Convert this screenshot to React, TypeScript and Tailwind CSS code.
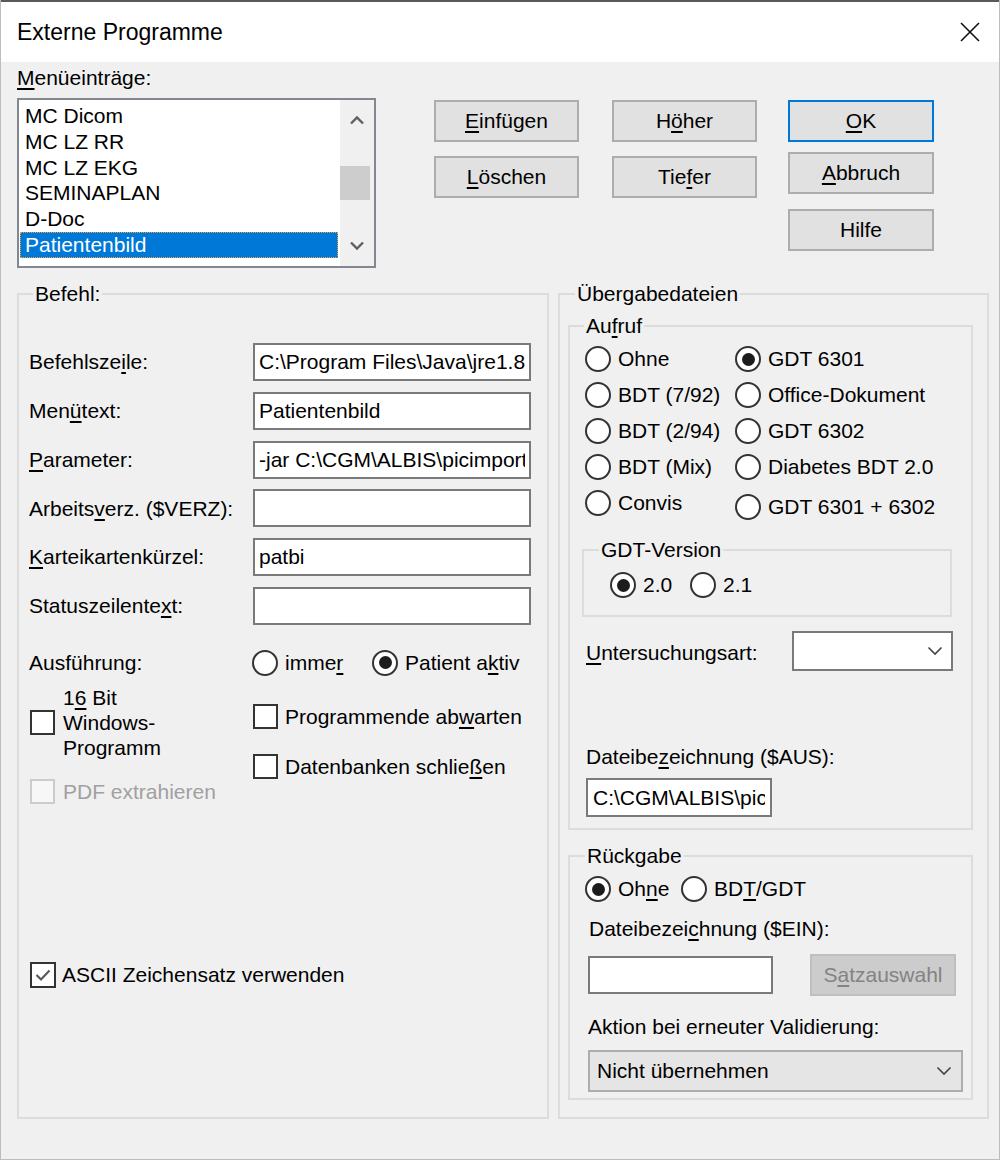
import React from 'react';

type Kids = { children?: React.ReactNode };

function M({ children }: Kids) {
  return <span className="underline underline-offset-[3px] decoration-[1.5px]">{children}</span>;
}

function Radio({ checked, label, className = '' }: { checked?: boolean; label: React.ReactNode; className?: string }) {
  return (
    <div className={`flex items-center h-[30px] ${className}`}>
      <span className="w-[26px] h-[26px] rounded-full border-2 border-[#333333] bg-white flex items-center justify-center shrink-0">
        {checked && <span className="w-[13px] h-[13px] rounded-full bg-[#1c1c1c]" />}
      </span>
      <span className="ml-[7px] leading-[24px] whitespace-nowrap">{label}</span>
    </div>
  );
}

function Check({ checked, disabled, size = 'w-[25px] h-[25px]' }: { checked?: boolean; disabled?: boolean; size?: string }) {
  return (
    <span
      className={`${size} border-2 flex items-center justify-center shrink-0 ${
        disabled ? 'border-[#cccccc] bg-[#f7f7f7]' : 'border-[#333333] bg-white'
      }`}
    >
      {checked && (
        <svg width="18" height="16" viewBox="0 0 18 16">
          <path d="M2.5 8 L7 12.5 L15.5 3.5" fill="none" stroke="#5a5a5a" strokeWidth="2.2" />
        </svg>
      )}
    </span>
  );
}

function Chevron({ color = '#444444' }: { color?: string }) {
  return (
    <svg width="16" height="10" viewBox="0 0 16 10">
      <path d="M1.5 1.5 L8 8 L14.5 1.5" fill="none" stroke={color} strokeWidth="1.6" />
    </svg>
  );
}

function Group({ title, legendClass, className = '', children }: Kids & { title: React.ReactNode; legendClass: string; className?: string }) {
  return (
    <fieldset className={`border-2 border-[#dcdcdc] p-0 m-0 min-w-0 ${className}`}>
      <legend className={`px-[2px] h-[24px] leading-[24px] ${legendClass}`}>{title}</legend>
      {children}
    </fieldset>
  );
}

const btn = 'h-[42px] bg-[#e1e1e1] border-2 border-[#adadad] flex items-center justify-center';
const field = 'bg-white border-2 border-[#7a7a7a] text-[21px] outline-none px-[4px] text-black';

const menuItems = ['MC Dicom', 'MC LZ RR', 'MC LZ EKG', 'SEMINAPLAN', 'D-Doc', 'Patientenbild'];

export default function App() {
  return (
    <div className="w-[1000px] h-[1160px] bg-[#f0f0f0] border-x border-b border-[#bdbdbd] text-[21px] text-black font-['Liberation_Sans',Arial,sans-serif]">
      {/* title bar */}
      <div className="h-[62px] bg-white border-t-2 border-[#595959] flex items-center pl-[16px] pr-[19px]">
        <span className="text-[23px] leading-[28px]">Externe Programme</span>
        <svg className="ml-auto" width="20" height="20" viewBox="0 0 20 20">
          <path d="M1 1 L19 19 M19 1 L1 19" stroke="#111111" strokeWidth="1.6" />
        </svg>
      </div>

      <div className="pl-[16px] pr-[10px] pt-[4px]">
        {/* top: list + buttons */}
        <div className="flex items-start h-[202px]">
          <div className="w-[359px]">
            <div className="h-[24px] leading-[24px]">
              <M>M</M>enüeinträge:
            </div>
            <div className="mt-[8px] h-[170px] border-2 border-[#828790] bg-white flex">
              <div className="w-[321px] pt-[3px] overflow-hidden">
                {menuItems.map(item =>
                  item === 'Patientenbild' ? (
                    <div
                      key={item}
                      className="ml-[1px] w-[318px] h-[25.8px] leading-[25.8px] pl-[5px] bg-[#0078d7] text-white outline-1 outline-dotted outline-[#f0a53c] -outline-offset-1"
                    >
                      {item}
                    </div>
                  ) : (
                    <div key={item} className="h-[25.8px] leading-[25.8px] pl-[6px] whitespace-nowrap">
                      {item}
                    </div>
                  )
                )}
              </div>
              <div className="flex-1 bg-[#f0f0f0] flex flex-col">
                <div className="h-[40px] flex items-center justify-center">
                  <svg width="16" height="10" viewBox="0 0 16 10">
                    <path d="M2 8.5 L8 2.5 L14 8.5" fill="none" stroke="#606060" strokeWidth="2.4" />
                  </svg>
                </div>
                <div className="mt-[26px] h-[34px] w-[30px] bg-[#cdcdcd]" />
                <div className="flex-1" />
                <div className="h-[40px] flex items-center justify-center">
                  <svg width="16" height="10" viewBox="0 0 16 10">
                    <path d="M2 1.5 L8 7.5 L14 1.5" fill="none" stroke="#606060" strokeWidth="2.4" />
                  </svg>
                </div>
              </div>
            </div>
          </div>

          <div className="ml-[58px] mt-[34px] flex flex-col gap-[14px] w-[145px]">
            <div className={btn}>
              <span>
                <M>E</M>infügen
              </span>
            </div>
            <div className={btn}>
              <span>
                <M>L</M>öschen
              </span>
            </div>
          </div>
          <div className="ml-[33px] mt-[34px] flex flex-col gap-[14px] w-[145px]">
            <div className={btn}>
              <span>
                H<M>ö</M>her
              </span>
            </div>
            <div className={btn}>
              <span>
                Tie<M>f</M>er
              </span>
            </div>
          </div>
          <div className="ml-[31px] mt-[34px] flex flex-col w-[146px]">
            <div className="h-[42px] bg-[#e1e1e1] border-2 border-[#0078d7] flex items-center justify-center">
              <span>
                <M>O</M>K
              </span>
            </div>
            <div className={`${btn} mt-[10px] h-[41px]`}>
              <span>
                <M>A</M>bbruch
              </span>
            </div>
            <div className={`${btn} mt-[15px] h-[41px]`}>
              <span>Hilfe</span>
            </div>
          </div>
        </div>

        {/* bottom: group boxes */}
        <div className="flex gap-[9px] mt-[14px]">
          <Group title="Befehl:" legendClass="ml-[14px]" className="w-[532px] h-[837px]">
            <div className="pl-[10px] pr-[16px] pt-[37px]">
              <div className="grid grid-cols-[224px_278px] gap-y-[10.8px] items-center">
                <div>
                  Befehlsze<M>i</M>le:
                </div>
                <input readOnly className={`${field} h-[38px] w-[278px]`} value={'C:\\Program Files\\Java\\jre1.8.0_151\\bin\\javaw.exe'} />
                <div>
                  Men<M>ü</M>text:
                </div>
                <input readOnly className={`${field} h-[38px] w-[278px]`} value="Patientenbild" />
                <div>
                  <M>P</M>arameter:
                </div>
                <input readOnly className={`${field} h-[38px] w-[278px]`} value={'-jar C:\\CGM\\ALBIS\\picimport.jar'} />
                <div>
                  Arbeits<M>v</M>erz. ($VERZ):
                </div>
                <input readOnly className={`${field} h-[38px] w-[278px]`} value="" />
                <div>
                  <M>K</M>arteikartenkürzel:
                </div>
                <input readOnly className={`${field} h-[38px] w-[278px]`} value="patbi" />
                <div>
                  Statuszeilente<M>x</M>t:
                </div>
                <input readOnly className={`${field} h-[38px] w-[278px]`} value="" />
              </div>

              <div className="mt-[23px] grid grid-cols-[224px_1fr] items-start">
                <div className="h-[30px] flex items-center">Ausführung:</div>
                <div className="h-[30px] flex items-center -ml-[1px]">
                  <Radio
                    className="w-[120px]"
                    label={
                      <>
                        imme<M>r</M>
                      </>
                    }
                  />
                  <Radio
                    checked
                    label={
                      <>
                        Patient a<M>k</M>tiv
                      </>
                    }
                  />
                </div>

                <div className="flex flex-col">
                  <div className="mt-[7.5px] flex items-center">
                    <span className="ml-[1px]">
                      <Check />
                    </span>
                    <span className="ml-[8px] leading-[25px]">
                      1<M>6</M> Bit
                      <br />
                      Windows-
                      <br />
                      Programm
                    </span>
                  </div>
                  <div className="mt-[16.5px] h-[30px] flex items-center">
                    <span className="ml-[1px]">
                      <Check disabled />
                    </span>
                    <span className="ml-[8px] text-[#a0a0a0]">PDF extrahieren</span>
                  </div>
                </div>

                <div className="flex flex-col">
                  <div className="mt-[24px] h-[30px] flex items-center">
                    <Check />
                    <span className="ml-[7px]">
                      Programmende ab<M>w</M>arten
                    </span>
                  </div>
                  <div className="mt-[20px] h-[30px] flex items-center">
                    <Check />
                    <span className="ml-[7px]">
                      Datenbanken schlie<M>ß</M>en
                    </span>
                  </div>
                </div>
              </div>

              <div className="mt-[153px] h-[30px] flex items-center">
                <span className="ml-[1px]">
                  <Check checked size="w-[26px] h-[26px]" />
                </span>
                <span className="ml-[6px]">ASCII Zeichensatz verwenden</span>
              </div>
            </div>
          </Group>

          <Group title="Übergabedateien" legendClass="ml-[15px]" className="w-[431px] h-[837px]">
            <div className="pl-[8px] pt-[8px]">
              <Group
                title={
                  <>
                    Au<M>f</M>ruf
                  </>
                }
                legendClass="ml-[14px]"
                className="w-[405px] h-[516px]"
              >
                <div className="pl-[15px] pt-[6px] grid grid-cols-[150px_1fr] gap-y-[6px]">
                  <Radio label="Ohne" />
                  <Radio checked label="GDT 6301" />
                  <Radio label="BDT (7/92)" />
                  <Radio label="Office-Dokument" />
                  <Radio label="BDT (2/94)" />
                  <Radio label="GDT 6302" />
                  <Radio label="BDT (Mix)" />
                  <Radio label="Diabetes BDT 2.0" />
                  <Radio label="Convis" />
                  <Radio className="mt-[4px]" label="GDT 6301 + 6302" />
                </div>

                <Group title="GDT-Version" legendClass="ml-[15px]" className="ml-[12px] mt-[16px] w-[370px] h-[79px]">
                  <div className="pl-[26px] pt-[8px] flex">
                    <Radio checked className="w-[80px]" label="2.0" />
                    <Radio label="2.1" />
                  </div>
                </Group>

                <div className="mt-[14px] ml-[16px] h-[40px] flex items-center">
                  <div className="w-[206px] pt-[4px]">
                    <M>U</M>ntersuchungsart:
                  </div>
                  <div className="w-[161px] h-[40px] bg-white border-2 border-[#7a7a7a] flex items-center justify-end pr-[8px]">
                    <Chevron />
                  </div>
                </div>

                <div className="mt-[74px] ml-[16px] h-[24px] leading-[24px]">
                  Dateibe<M>z</M>eichnung ($AUS):
                </div>
                <input
                  readOnly
                  className={`${field} mt-[9px] ml-[16px] w-[186px] h-[39px] px-[5px]`}
                  value={'C:\\CGM\\ALBIS\\picimport.gdt'}
                />
              </Group>

              <Group title="Rückgabe" legendClass="ml-[15px]" className="mt-[14px] w-[405px] h-[256px]">
                <div className="mt-[6px] pl-[15px] flex">
                  <Radio
                    checked
                    className="w-[96px]"
                    label={
                      <>
                        Oh<M>n</M>e
                      </>
                    }
                  />
                  <Radio
                    label={
                      <>
                        BD<M>T</M>/GDT
                      </>
                    }
                  />
                </div>
                <div className="mt-[13px] ml-[19px] h-[24px] leading-[24px]">
                  Dateibezei<M>c</M>hnung ($EIN):
                </div>
                <div className="mt-[13px] ml-[18px] flex items-center">
                  <input readOnly className={`${field} w-[185px] h-[38px]`} value="" />
                  <div className="ml-[37px] w-[146px] h-[42px] bg-[#cccccc] border-2 border-[#bfbfbf] flex items-center justify-center text-[#838383]">
                    <span>
                      S<M>a</M>tzauswahl
                    </span>
                  </div>
                </div>
                <div className="mt-[19px] ml-[18px] h-[24px] leading-[24px]">Aktion bei erneuter Validierung:</div>
                <div className="mt-[11px] ml-[18px] w-[375px] h-[42px] bg-[#e5e5e5] border-2 border-[#adadad] flex items-center pl-[7px] pr-[9px]">
                  <span>Nicht übernehmen</span>
                  <span className="ml-auto">
                    <Chevron />
                  </span>
                </div>
              </Group>
            </div>
          </Group>
        </div>
      </div>
    </div>
  );
}
